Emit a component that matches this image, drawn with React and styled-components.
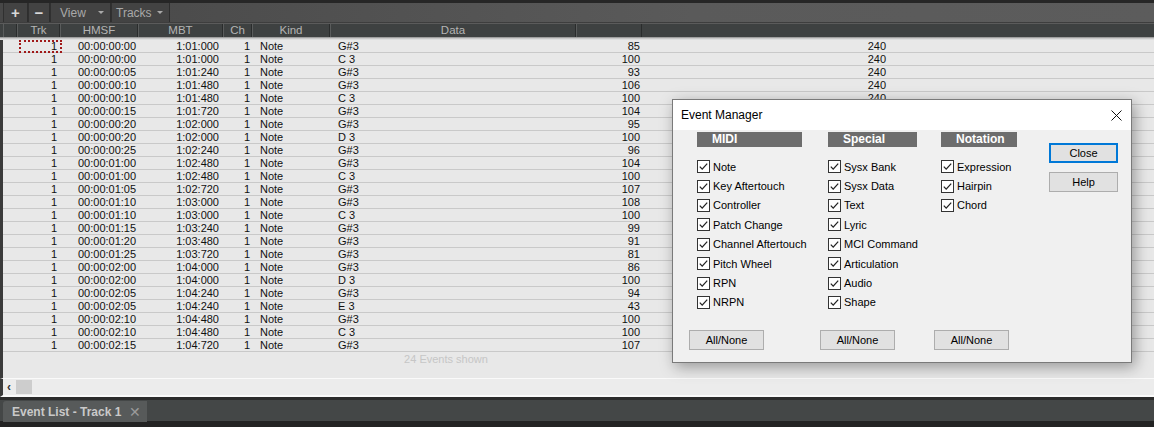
import React from 'react';
import styled, { createGlobalStyle } from 'styled-components';

const GlobalStyle = createGlobalStyle`
  html, body {
    margin: 0;
    padding: 0;
    background: #2b2b2b;
    overflow: hidden;
  }
  * {
    box-sizing: border-box;
  }
`;

const COLS = '14px 43px 78px 85px 29px 78px 246px 66px 246px 1fr';

const events = [
  ['00:00:00:00', '1:01:000', 'G#3', 85],
  ['00:00:00:00', '1:01:000', 'C 3', 100],
  ['00:00:00:05', '1:01:240', 'G#3', 93],
  ['00:00:00:10', '1:01:480', 'G#3', 106],
  ['00:00:00:10', '1:01:480', 'C 3', 100],
  ['00:00:00:15', '1:01:720', 'G#3', 104],
  ['00:00:00:20', '1:02:000', 'G#3', 95],
  ['00:00:00:20', '1:02:000', 'D 3', 100],
  ['00:00:00:25', '1:02:240', 'G#3', 96],
  ['00:00:01:00', '1:02:480', 'G#3', 104],
  ['00:00:01:00', '1:02:480', 'C 3', 100],
  ['00:00:01:05', '1:02:720', 'G#3', 107],
  ['00:00:01:10', '1:03:000', 'G#3', 108],
  ['00:00:01:10', '1:03:000', 'C 3', 100],
  ['00:00:01:15', '1:03:240', 'G#3', 99],
  ['00:00:01:20', '1:03:480', 'G#3', 91],
  ['00:00:01:25', '1:03:720', 'G#3', 81],
  ['00:00:02:00', '1:04:000', 'G#3', 86],
  ['00:00:02:00', '1:04:000', 'D 3', 100],
  ['00:00:02:05', '1:04:240', 'G#3', 94],
  ['00:00:02:05', '1:04:240', 'E 3', 43],
  ['00:00:02:10', '1:04:480', 'G#3', 100],
  ['00:00:02:10', '1:04:480', 'C 3', 100],
  ['00:00:02:15', '1:04:720', 'G#3', 107],
];

// durations further down sit behind the dialog
const VISIBLE_DURATIONS = 5;

const midiKinds = ['Note', 'Key Aftertouch', 'Controller', 'Patch Change', 'Channel Aftertouch', 'Pitch Wheel', 'RPN', 'NRPN'];
const specialKinds = ['Sysx Bank', 'Sysx Data', 'Text', 'Lyric', 'MCI Command', 'Articulation', 'Audio', 'Shape'];
const notationKinds = ['Expression', 'Hairpin', 'Chord'];

const Page = styled.div`
  position: relative;
  width: 1154px;
  height: 427px;
  display: flex;
  flex-direction: column;
  font-family: 'Liberation Sans', Arial, sans-serif;
  font-size: 11px;
  background: #2b2b2b;
`;

const TopStrip = styled.div`
  height: 3px;
  background: #262626;
`;

const Toolbar = styled.div`
  height: 19px;
  display: flex;
  align-items: stretch;
  padding-left: 3px;
  background: linear-gradient(to right, #474747, #5a5a5a 60%, #5c5c5c);
`;

const ToolButton = styled.div`
  width: ${(p) => p.$w}px;
  display: flex;
  align-items: center;
  justify-content: ${(p) => (p.$menu ? 'space-between' : 'center')};
  padding: ${(p) => (p.$menu ? `0 6px 0 ${p.$lead}px` : '0')};
  background: #434343;
  border-left: 1px solid #303030;
  border-right: 1px solid #2e2e2e;
  color: ${(p) => (p.$strong ? '#d8d8d8' : '#a9a9a9')};
  font-size: ${(p) => (p.$strong ? '15px' : '12px')};
  font-weight: ${(p) => (p.$strong ? 'bold' : 'normal')};
`;

const Caret = styled.span`
  width: 0;
  height: 0;
  border-left: 3px solid transparent;
  border-right: 3px solid transparent;
  border-top: 3px solid #a9a9a9;
`;

const Divider = styled.div`
  height: 2px;
  background: linear-gradient(#2f2f2f, #6a6a6a);
`;

const HeaderRow = styled.div`
  height: 13px;
  display: grid;
  grid-template-columns: ${COLS};
  padding-left: 3px;
  background: #3e4141;
`;

const HeadCell = styled.div`
  color: #b4b4b4;
  text-align: center;
  line-height: 13px;
  font-size: 11.5px;
  border-right: ${(p) => (p.$open ? 'none' : '1px solid #2a2c2c')};
  border-left: ${(p) => (p.$open ? 'none' : '1px solid #5a5c5c')};
`;

const HeaderLine = styled.div`
  height: 3px;
  background: linear-gradient(#8a8a8a, #c8c8c8 50%, #e8e8e8);
`;

const ListArea = styled.div`
  flex: 1;
  display: flex;
  flex-direction: column;
  border-left: 3px solid #3b3b3b;
  background: #e8e8e8;
`;

const Row = styled.div`
  height: 13px;
  display: grid;
  grid-template-columns: ${COLS};
  border-bottom: 1px solid #c9c9c9;
  color: #111;
  line-height: 12px;
`;

const Cell = styled.div`
  position: relative;
  white-space: nowrap;
  text-align: ${(p) => (p.$right ? 'right' : 'left')};
  padding: ${(p) => p.$pad || '0'};
  ${(p) =>
    p.$focus &&
    `&::after {
      content: '';
      position: absolute;
      left: 2px;
      right: -2px;
      top: 0;
      bottom: -1px;
      border: 2px dotted #a01818;
    }`}
`;

const Summary = styled.div`
  width: 886px;
  text-align: center;
  color: #c6c6c6;
  padding-top: 1px;
  height: 26px;
`;

const Scrollbar = styled.div`
  height: 19px;
  display: flex;
  align-items: center;
  gap: 5px;
  padding-left: 4px;
  border-top: 1px solid #fafafa;
  border-bottom: 2px solid #fafafa;
  border-left: 3px solid #3b3b3b;
  background: #ececec;
  color: #333;
  font-size: 12px;
  font-weight: bold;
`;

const Thumb = styled.div`
  width: 16px;
  height: 14px;
  background: #cdcdcd;
`;

const TabBar = styled.div`
  flex: 1;
  display: flex;
  align-items: flex-end;
  padding: 3px 0 6px 3px;
  background: linear-gradient(#2c2c2c 0 3px, #444747 3px);
  position: relative;
  &::after {
    content: '';
    position: absolute;
    left: 0;
    right: 0;
    bottom: 0;
    height: 6px;
    background: #232323;
  }
`;

const Tab = styled.div`
  width: 144px;
  height: 21px;
  display: flex;
  align-items: center;
  justify-content: space-between;
  padding: 0 6px 0 9px;
  background: #575a5a;
  border-radius: 3px 0 0 0;
  color: #c9c9c9;
  font-size: 12px;
  font-weight: bold;
  position: relative;
  z-index: 1;
  margin-bottom: -1px;
`;

const TabClose = styled.span`
  color: #9a9a9a;
  font-size: 14px;
  font-weight: normal;
`;

const Dialog = styled.div`
  position: absolute;
  left: 672px;
  top: 99px;
  width: 460px;
  height: 264px;
  display: flex;
  flex-direction: column;
  background: #f0f0f0;
  border: 1px solid #7a7a7a;
  box-shadow: 3px 4px 14px rgba(0, 0, 0, 0.35);
  font-family: 'Liberation Sans', Arial, sans-serif;
  color: #000;
`;

const TitleBar = styled.div`
  height: 30px;
  display: flex;
  align-items: center;
  justify-content: space-between;
  padding: 0 9px 0 8px;
  background: #fff;
  font-size: 12px;
`;

const DialogBody = styled.div`
  flex: 1;
  display: flex;
  padding: 2px 0 12px 16px;
`;

const Group = styled.div`
  width: ${(p) => p.$w}px;
  display: flex;
  flex-direction: column;
`;

const GroupHead = styled.div`
  width: ${(p) => p.$w}px;
  height: 15px;
  margin-left: ${(p) => p.$indent}px;
  margin-bottom: 10px;
  padding-left: 15px;
  background: #6d6d6d;
  color: #fff;
  font-size: 12px;
  font-weight: bold;
  line-height: 15px;
`;

const CheckRow = styled.label`
  height: 19.4px;
  display: flex;
  align-items: center;
  gap: 3px;
  margin-left: ${(p) => p.$indent}px;
  font-size: 11px;
  white-space: nowrap;
`;

const WinButton = styled.div`
  width: ${(p) => p.$w || 75}px;
  height: 20px;
  display: flex;
  align-items: center;
  justify-content: center;
  background: #e1e1e1;
  border: ${(p) => (p.$default ? '2px solid #0078d7' : '1px solid #adadad')};
  font-size: 11px;
`;

const Spacer = styled.div`
  flex: 1;
`;

const SideButtons = styled.div`
  display: flex;
  flex-direction: column;
  gap: 9px;
  padding-top: 11px;
`;

const CheckBox = () => (
  <svg width="13" height="13" viewBox="0 0 13 13">
    <rect x="0.5" y="0.5" width="12" height="12" fill="#fff" stroke="#333" />
    <path d="M2.8 6.6 L5.2 9.1 L10.2 3.6" fill="none" stroke="#222" strokeWidth="1.3" />
  </svg>
);

const CloseGlyph = () => (
  <svg width="11" height="11" viewBox="0 0 11 11">
    <path d="M0.5 0.5 L10.5 10.5 M10.5 0.5 L0.5 10.5" stroke="#111" strokeWidth="1" />
  </svg>
);

const CheckGroup = ({ title, items, width, headWidth, indent }) => (
  <Group $w={width}>
    <GroupHead $w={headWidth} $indent={indent}>{title}</GroupHead>
    {items.map((item) => (
      <CheckRow key={item} $indent={indent}>
        <CheckBox />
        {item}
      </CheckRow>
    ))}
    <Spacer />
    <WinButton>All/None</WinButton>
  </Group>
);

const App = () => (
  <Page>
    <GlobalStyle />
    <TopStrip />
    <Toolbar>
      <ToolButton $w={25} $strong>+</ToolButton>
      <ToolButton $w={22} $strong>−</ToolButton>
      <ToolButton $w={61} $menu $lead={9}>
        View <Caret />
      </ToolButton>
      <ToolButton $w={59} $menu $lead={4}>
        Tracks <Caret />
      </ToolButton>
    </Toolbar>
    <Divider />
    <HeaderRow>
      <HeadCell />
      <HeadCell>Trk</HeadCell>
      <HeadCell>HMSF</HeadCell>
      <HeadCell>MBT</HeadCell>
      <HeadCell>Ch</HeadCell>
      <HeadCell>Kind</HeadCell>
      <HeadCell>Data</HeadCell>
      <HeadCell />
      <HeadCell $open />
      <HeadCell $open />
    </HeaderRow>
    <HeaderLine />
    <ListArea>
      {events.map(([hmsf, mbt, pitch, vel], i) => (
        <Row key={i}>
          <Cell />
          <Cell $right $pad="0 3px 0 0" $focus={i === 0}>1</Cell>
          <Cell $pad="0 0 0 18px">{hmsf}</Cell>
          <Cell $right $pad="0 4px 0 0">{mbt}</Cell>
          <Cell $right $pad="0 2px 0 0">1</Cell>
          <Cell $pad="0 0 0 8px">Note</Cell>
          <Cell $pad="0 0 0 8px">{pitch}</Cell>
          <Cell $right $pad="0 2px 0 0">{vel}</Cell>
          <Cell $right $pad="0 2px 0 0">{i < VISIBLE_DURATIONS ? 240 : ''}</Cell>
          <Cell />
        </Row>
      ))}
      <Summary>24 Events shown</Summary>
    </ListArea>
    <Scrollbar>
      <span>‹</span>
      <Thumb />
    </Scrollbar>
    <TabBar>
      <Tab>
        Event List - Track 1
        <TabClose>✕</TabClose>
      </Tab>
    </TabBar>

    <Dialog>
      <TitleBar>
        Event Manager
        <CloseGlyph />
      </TitleBar>
      <DialogBody>
        <CheckGroup title="MIDI" items={midiKinds} width={131} headWidth={105} indent={8} />
        <CheckGroup title="Special" items={specialKinds} width={114} headWidth={89} indent={8} />
        <CheckGroup title="Notation" items={notationKinds} width={115} headWidth={76} indent={7} />
        <SideButtons>
          <WinButton $w={69} $default>Close</WinButton>
          <WinButton $w={69}>Help</WinButton>
        </SideButtons>
      </DialogBody>
    </Dialog>
  </Page>
);

export default App;
